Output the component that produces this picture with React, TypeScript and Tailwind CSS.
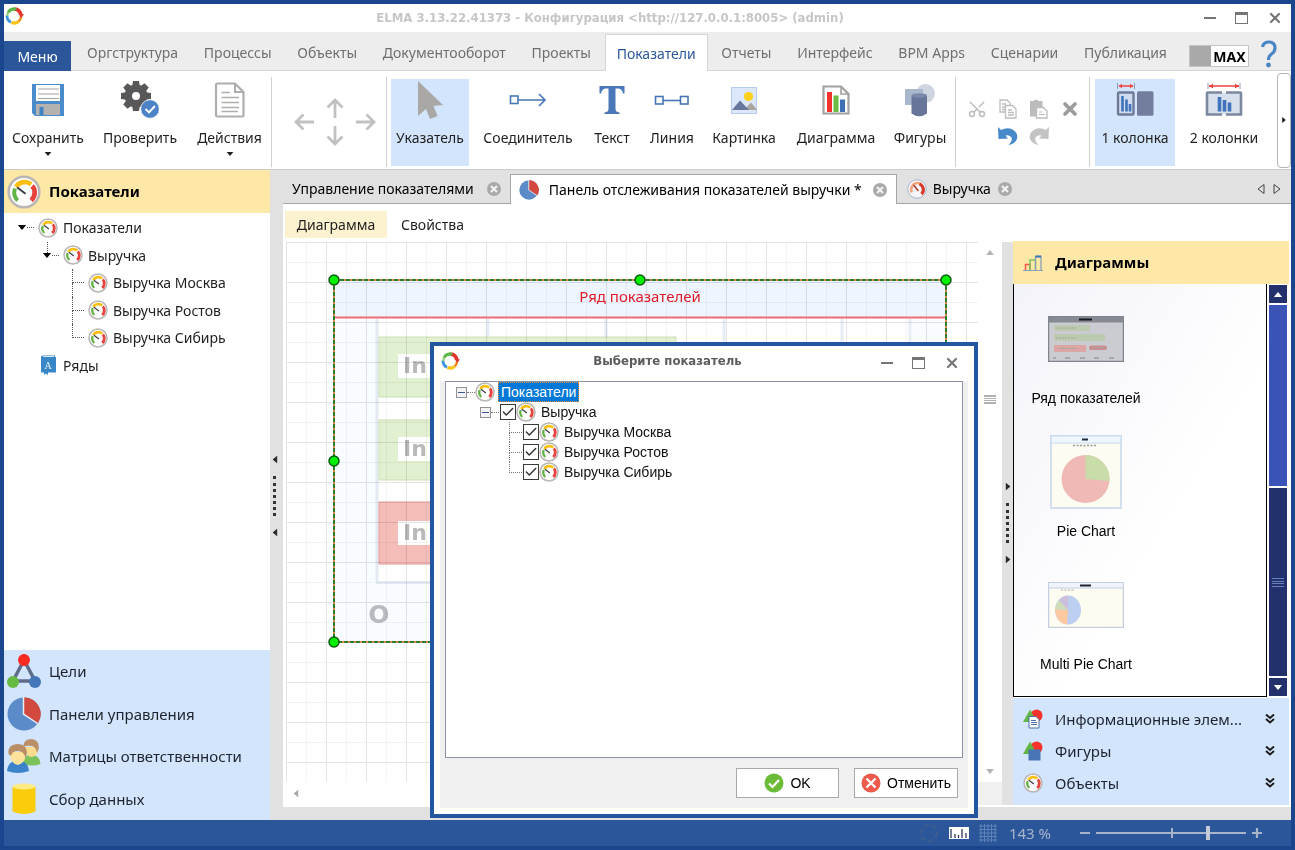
import React from "react";
import { Check, Scissors, X } from "lucide-react";

const UI = "font-['Noto_Sans','Open_Sans',sans-serif]";
const TAHOMA = "font-['DejaVu_Sans_Condensed','DejaVu_Sans',sans-serif]";
const ARIAL = "font-['Liberation_Sans',Arial,sans-serif]";

/* ---------- icons ---------- */

function Gauge({ className }: { className: string }) {
  return (
    <svg viewBox="0 0 40 40" className={className} fill="none" aria-hidden="true">
      <circle cx="20" cy="20" r="18" fill="#fdfdfd" stroke="#b9b6b4" strokeWidth="3" />
      <path d="M12.5 30 C8.5 26 7.5 21 9.5 16" stroke="#63b345" strokeWidth="4.6" />
      <path d="M10.5 14 C14.5 7.500 23 6.500 28.500 11" stroke="#fdbf12" strokeWidth="5.4" />
      <path d="M29.500 13 C34 17 33.500 25 28.500 30" stroke="#e8423c" strokeWidth="5.6" />
      <path d="M12.500 15 L21 21.500" stroke="#3c4046" strokeWidth="2.4" strokeLinecap="round" />
    </svg>
  );
}

function DialGauge() {
  return (
    <svg viewBox="0 0 40 40" className="size-5 shrink-0" fill="none" aria-hidden="true">
      <circle cx="20" cy="20" r="18.500" fill="#f4f6f9" stroke="#a3b3c8" strokeWidth="2" />
      <path d="M9 27 C6 16 13 8 21 8 C31 8 36 20 29 30" stroke="#f3a27c" strokeWidth="5" />
      <path d="M25 10 C34 14 35 25 29 30" stroke="#d7372c" strokeWidth="6" />
      <path d="M14 13 L22 23" stroke="#a43a2f" strokeWidth="3" strokeLinecap="round" />
    </svg>
  );
}

function Logo() {
  return (
    <svg viewBox="0 0 20 20" className="size-5 shrink-0" fill="none" strokeWidth="3" aria-hidden="true">
      <path d="M4 6.500 A7 7 0 0 1 10 3" stroke="#58b747" />
      <path d="M11 3 A7 7 0 0 1 16.800 9" stroke="#e5322b" strokeWidth="3.600" />
      <path d="M17 10 A7 7 0 0 1 14.500 15.500" stroke="#f08a1e" strokeWidth="2.400" />
      <path d="M14.500 15.500 A7 7 0 0 1 7.500 16.500" stroke="#fbc412" strokeWidth="3.400" />
      <path d="M7 16.200 A7 7 0 0 1 3 9.500" stroke="#3f94dc" strokeWidth="2.800" />
      <path d="M3.200 10 A7 7 0 0 1 4.500 6" stroke="#8fce72" strokeWidth="2.200" />
      <path d="M15 7.500 L20 8.500 L17 12Z" fill="#e5322b" />
      <path d="M9.500 0.500 L13 2.800 L10 5.500Z" fill="#58b747" />
    </svg>
  );
}

function PieIcon({ className }: { className: string }) {
  return (
    <svg viewBox="0 0 34 34" className={className} aria-hidden="true">
      <circle cx="17" cy="17" r="16.500" fill="#5b8bc9" />
      <path d="M17 17 V0.500 A16.500 16.500 0 0 1 31 26Z" fill="#d2493f" />
      <path d="M16.500 0 V17 L30.500 26.500" stroke="#e7eef8" strokeWidth="1.500" fill="none" />
    </svg>
  );
}

function SaveIcon() {
  return (
    <svg viewBox="0 0 32 32" className="size-8" aria-hidden="true">
      <path d="M0 0H32V32H3L0 29Z" fill="#4a8ccb" />
      <rect x="4" y="1" width="24" height="16" fill="#fff" />
      <path d="M6 5H27M6 10H27M6 14.500H27" stroke="#a9a0a0" />
      <rect x="4" y="20" width="24" height="11" fill="#b4b1af" />
      <rect x="7.500" y="23" width="4" height="8" fill="#3f82c2" />
    </svg>
  );
}

function GearCheckIcon() {
  const teeth = [0, 45, 90, 135, 180, 225, 270, 315];
  return (
    <svg viewBox="0 0 38 38" className="size-[38px]" aria-hidden="true">
      {teeth.map((a) => (
        <path key={a} d="M12 0H18L19 7H11Z" fill="#58585a" transform={`rotate(${a} 15 15)`} />
      ))}
      <circle cx="15" cy="15" r="11.500" fill="#58585a" />
      <circle cx="15" cy="15" r="4" fill="#fff" />
      <circle cx="29" cy="28" r="9.300" fill="#4c82c6" stroke="#fff" strokeWidth="0.800" />
      <path d="M24.500 28 L28 31.500 L34 25" stroke="#fff" strokeWidth="1.900" fill="none" />
    </svg>
  );
}

function ActionsIcon() {
  return (
    <svg viewBox="0 0 32 36" className="h-9 w-8" fill="none" stroke="#b0aeac" aria-hidden="true">
      <path d="M3.500 1.500H21L29.500 10V33.500Q29.500 34.500 28.500 34.500H3.500Q2 34.500 2 33.500V2.500Q2 1.500 3.500 1.500Z" strokeWidth="2.200" />
      <path d="M21 2V10H29" strokeWidth="2" />
      <path d="M7.500 10.500H16M7.500 15.500H25M7.500 20.500H25M7.500 25.500H25M7.500 29.500H24" strokeWidth="1.400" />
    </svg>
  );
}

function PointerIcon() {
  return (
    <svg viewBox="0 0 26 38" className="h-[38px] w-[26px]" aria-hidden="true">
      <path d="M1 0 L26 24 L16.500 25 L20.500 35 L13 38 L9 28 L1 35Z" fill="#aaa8a7" />
    </svg>
  );
}

function ConnectorIcon() {
  return (
    <svg viewBox="0 0 38 14" className="h-3.5 w-[38px]" fill="none" stroke="#4876b4" strokeWidth="1.600" aria-hidden="true">
      <rect x="1.500" y="3" width="7.500" height="7.500" />
      <path d="M9 7H36M30 1L36 7L30 13" />
    </svg>
  );
}

function LineIcon() {
  return (
    <svg viewBox="0 0 36 12" className="h-3 w-9" fill="none" stroke="#4876b4" strokeWidth="1.600" aria-hidden="true">
      <rect x="1.500" y="2.500" width="7.500" height="7.500" />
      <rect x="26.500" y="2.500" width="7.500" height="7.500" />
      <path d="M9 6.500H26.500" />
    </svg>
  );
}

function TextIcon() {
  return (
    <svg viewBox="0 0 26 28" className="h-7 w-[26px]" aria-hidden="true">
      <path d="M0.500 0H25.500V7.500H24Q23 2.500 19 2.500H16.500V23Q16.500 26 20.500 26.500V28H5.500V26.500Q9.500 26 9.500 23V2.500H7Q3 2.500 2 7.500H0.500Z" fill="#4a78b8" />
    </svg>
  );
}

function PictureIcon() {
  return (
    <svg viewBox="0 0 26 27" className="h-[27px] w-[26px]" aria-hidden="true">
      <rect x="0.500" y="0.500" width="25" height="26" fill="#dce7fb" stroke="#b6cbf2" />
      <circle cx="17.500" cy="9.500" r="4.600" fill="#fbd11c" />
      <path d="M13 23 L20 15.500 L25.500 22V23Z" fill="#a9a6a0" />
      <path d="M1 23 L9 13.500 L18 23Z" fill="#66779b" />
    </svg>
  );
}

function ChartFileIcon() {
  return (
    <svg viewBox="0 0 28 30" className="h-[30px] w-7" fill="none" aria-hidden="true">
      <path d="M1.500 1.500H19L26.500 9V28.500H1.500Z" stroke="#a3a09e" strokeWidth="2.200" />
      <path d="M19 1.500V9H26.500" stroke="#a3a09e" strokeWidth="1.600" />
      <rect x="5" y="7" width="5" height="20" fill="#f2322c" />
      <rect x="11.500" y="10.500" width="5" height="16.500" fill="#6bbd45" />
      <rect x="18" y="14.500" width="5" height="12.500" fill="#3f6fb4" />
    </svg>
  );
}

function ShapesIcon() {
  return (
    <svg viewBox="0 0 30 33" className="h-[33px] w-[30px]" aria-hidden="true">
      <circle cx="20.500" cy="9.500" r="9.500" fill="#ced5df" />
      <rect x="0" y="5" width="18" height="16" fill="#a9b7cc" />
      <path d="M6.500 12V29.500Q14 35 22 29.500V12Z" fill="#68759a" />
      <ellipse cx="14.200" cy="11.500" rx="7.700" ry="2.300" fill="#7c88a8" />
    </svg>
  );
}

function OneColumnIcon() {
  return (
    <svg viewBox="0 0 38 34" className="h-[34px] w-[38px]" fill="none" aria-hidden="true">
      <path d="M1.500 0V6M18.500 0V6" stroke="#8e99b4" />
      <path d="M3 3H17" stroke="#f0453e" strokeWidth="1.500" />
      <path d="M2.500 3L6 0.800V5.200ZM17.500 3L14 0.800V5.200Z" fill="#f0453e" />
      <rect x="2" y="9.500" width="15.500" height="22" rx="1" fill="#cfdbee" stroke="#6d7a9a" strokeWidth="2.400" />
      <rect x="21" y="8.300" width="16.500" height="24.500" rx="1.500" fill="#737d9d" />
      <path d="M6.500 13V28.500M10.500 16.500V28.500M14 21V28.500" stroke="#3f73bc" strokeWidth="2.600" />
    </svg>
  );
}

function TwoColumnsIcon() {
  return (
    <svg viewBox="0 0 38 34" className="h-[34px] w-[38px]" fill="none" aria-hidden="true">
      <path d="M3 0V6M35 0V6" stroke="#8e99b4" />
      <path d="M4 3H34" stroke="#f0453e" strokeWidth="1.500" />
      <path d="M3.500 3L8 0.800V5.200ZM34.500 3L30 0.800V5.200Z" fill="#f0453e" />
      <rect x="2" y="9.500" width="34" height="22" fill="#d6dfeb" />
      <path d="M17 9.500H2.500Q2 9.500 2 10.500V31.500H17M21 9.500H35.500Q36 9.500 36 10.500V31.500H21" stroke="#7d879f" strokeWidth="2.600" />
      <path d="M14.500 14V28.500M19.500 17V28.500M24.500 19.500V28.500" stroke="#3f73bc" strokeWidth="3.600" />
    </svg>
  );
}

function UndoIcon({ color, flip }: { color: string; flip?: boolean }) {
  return (
    <svg viewBox="0 0 20 18" className={flip ? "h-[18px] w-5 -scale-x-100" : "h-[18px] w-5"} aria-hidden="true">
      <path d="M0 0 L3.200 3 Q9 0 14.500 2.500 Q20.500 6 19 12 Q17 17 10.500 18 Q15 14 13.500 10.500 Q11 7.500 7.500 8.500 L10 11.500 L0.500 12Z" fill={color} />
    </svg>
  );
}

function CopyIcon() {
  return (
    <svg viewBox="0 0 18 20" className="h-5 w-[18px]" fill="#fff" stroke="#bdbdbd" strokeWidth="1.300" aria-hidden="true">
      <path d="M1 1H8L11 4V13H1Z" />
      <path d="M3 5H7M3 8H7M3 10.500H7" />
      <path d="M6.500 6.500H13.500L17 10V19H6.500Z" />
      <path d="M9 11H13M9 13.500H15M9 16H15" />
    </svg>
  );
}

function PasteIcon() {
  return (
    <svg viewBox="0 0 19 20" className="h-5 w-[19px]" aria-hidden="true">
      <path d="M1 2H4.500Q7 -1 9.500 2H13.500V17.500H1Z" fill="#bcbcbc" />
      <path d="M7.500 8.500H14.500L18 12V19H7.500Z" fill="#fff" stroke="#bcbcbc" strokeWidth="1.300" />
      <path d="M10 13H13M10 15.500H16" stroke="#bcbcbc" />
    </svg>
  );
}

function ArrowGlyph({ turn }: { turn: string }) {
  return (
    <svg viewBox="0 0 20 20" className={`size-5 ${turn}`} fill="none" stroke="#c1c1c1" strokeWidth="2.800" aria-hidden="true">
      <path d="M10 20V2M2.500 9.500L10 2L17.500 9.500" />
    </svg>
  );
}

function CloseDot() {
  return (
    <svg viewBox="0 0 16 16" className="size-4" aria-hidden="true">
      <circle cx="8" cy="8" r="7" fill="#a9a9a9" />
      <path d="M5 5L11 11M11 5L5 11" stroke="#f2f2f2" strokeWidth="2.200" />
    </svg>
  );
}

function Triangle({ className }: { className: string }) {
  return (
    <svg viewBox="0 0 10 6" className={className} aria-hidden="true">
      <path d="M0 0H10L5 6Z" fill="currentColor" />
    </svg>
  );
}

function GoalsIcon() {
  return (
    <svg viewBox="0 0 34 34" className="size-[34px]" aria-hidden="true">
      <path d="M17 6L6 27H28Z" fill="none" stroke="#5e6c8a" strokeWidth="3.500" />
      <circle cx="17" cy="6" r="6" fill="#fb2a21" />
      <circle cx="6" cy="28" r="6" fill="#68bb42" />
      <circle cx="28" cy="28" r="6" fill="#4576b9" />
    </svg>
  );
}

function PeopleIcon() {
  return (
    <svg viewBox="0 0 34 34" className="size-[34px]" aria-hidden="true">
      <path d="M15 25 Q16 16 24 16 Q33 16 33.500 25 Q26 28 15 25Z" fill="#7cc25a" />
      <path d="M18 8 Q19 18 25 18 Q31 17 31.500 8Z" fill="#fbdc8c" />
      <path d="M16.500 8 Q16 0 25 0 Q32 1 32 9 L30 14 Q29 8 25 7 Q19 6 16.500 8Z" fill="#ba9068" />
      <path d="M0 32 Q1 23 8 22 H14 Q21 23 22 32 Q11 36 0 32Z" fill="#3d83c9" />
      <path d="M3 13 Q3 25 11 26 Q19 24 19 13Z" fill="#fce29a" />
      <path d="M1.500 15 Q0 6 10 5 Q20 5 20 14 L18.500 19 Q17 12 11 12 Q5 12 4 17Z" fill="#b98e66" />
    </svg>
  );
}

function DatabaseIcon() {
  return (
    <svg viewBox="0 0 34 34" className="size-[34px]" aria-hidden="true">
      <path d="M5.500 4V29.500Q17 34.500 28.500 29.500V4Z" fill="#f9cc0c" />
      <ellipse cx="17" cy="4.500" rx="11.500" ry="3" fill="#fdec86" />
    </svg>
  );
}

function BookIcon() {
  return (
    <svg viewBox="0 0 16 20" className="h-5 w-4 shrink-0" aria-hidden="true">
      <path d="M1 2 Q1 0.500 3 0.500H15V2H16V17.500H8V20L6 18.500L4 20V17.500H1Z" fill="#3a87c7" />
      <path d="M3 1.500H14" stroke="#d7e8f6" />
      <text x="8" y="14" textAnchor="middle" fontSize="10" fill="#e9f3fb" fontFamily="Liberation Serif">A</text>
    </svg>
  );
}

function BarsIcon() {
  return (
    <svg viewBox="0 0 20 16" className="h-4 w-5" fill="none" aria-hidden="true">
      <path d="M0 15.500H20" stroke="#8ca0b8" />
      <path d="M2.500 15V9.500H7V15" stroke="#f0574a" strokeWidth="1.500" />
      <path d="M7 15V5H12.500V15" stroke="#7cc25c" strokeWidth="1.500" />
      <path d="M12.500 15V1.500H18V15" stroke="#8ca0b8" strokeWidth="1.300" />
      <path d="M12.500 1.500H18" stroke="#3f76b8" strokeWidth="2" />
    </svg>
  );
}

function FigureIcon({ doc }: { doc?: boolean }) {
  return (
    <svg viewBox="0 0 20 20" className="size-5" aria-hidden="true">
      <circle cx="13.500" cy="6.500" r="6" fill="#f5322b" />
      <path d="M0 13L7 0.500L14 13Z" fill="#62b447" />
      {doc ? (
        <>
          <path d="M6 7.500H13L16 10.500V19H6Z" fill="#fff" stroke="#4a72a8" />
          <path d="M8 11.500H13M8 13.500H14M8 15.500H14" stroke="#4a72a8" />
        </>
      ) : (
        <rect x="5.500" y="8.500" width="12" height="11" fill="#4774b5" />
      )}
    </svg>
  );
}

function DoubleChevron() {
  return (
    <svg viewBox="0 0 10 10" className="size-2.5" fill="none" stroke="#1c1c1c" strokeWidth="2" aria-hidden="true">
      <path d="M1 0.500L5 4L9 0.500M1 5L5 8.500L9 5" />
    </svg>
  );
}

/* ---------- window chrome ---------- */

function WindowButtons() {
  return (
    <div className="flex items-center gap-[19px] text-[#757575]">
      <button aria-label="Свернуть" className="flex h-4 w-3 items-center">
        <span className="h-0.5 w-full bg-current" />
      </button>
      <button aria-label="Развернуть" className="h-3 w-[13px] border border-t-3 border-current" />
      <button aria-label="Закрыть">
        <X className="size-4" strokeWidth={3.2} />
      </button>
    </div>
  );
}

const menuTabs = [
  "Оргструктура", "Процессы", "Объекты", "Документооборот", "Проекты", "Показатели",
  "Отчеты", "Интерфейс", "BPM Apps", "Сценарии", "Публикация",
];

function MenuBar() {
  return (
    <nav className="flex h-[39px] shrink-0 items-end border-b border-[#d5d5d5] bg-[#ededed] text-[14px] text-[#6f6f6f]">
      <button className="mr-1 -mb-px h-[30px] w-[67px] bg-[#2b579a] text-[14px] text-white">Меню</button>
      <div className="mr-2.5 flex flex-1 items-end justify-between">
        {menuTabs.map((t) => (
          <a
            key={t}
            href="#"
            className={
              t === "Показатели"
                ? "-mb-px flex h-[37px] items-center border border-b-0 border-[#d5d5d5] bg-white px-[11px] text-[#2b579a]"
                : "flex h-[35px] items-center px-3"
            }
          >
            {t}
          </a>
        ))}
      </div>
      <div className="mr-3.5 flex items-center gap-3 pb-0.5">
        <button className="mt-1 flex h-[22px] w-[60px] items-center border border-[#c4c4c4] bg-white text-[14px] font-bold text-black">
          <span className="h-full w-[21px] bg-[#a9a9a9]" />
          <span className="flex-1">MAX</span>
        </button>
        <button aria-label="Справка" className="text-[#4a85c5]">
          <svg viewBox="0 0 16 28" className="h-7 w-4" fill="none" aria-hidden="true">
            <path d="M1.500 7 Q2.500 2 8 2 Q14 2 14 8 Q14 11.500 10.500 14 Q7.500 16 7.500 20" stroke="currentColor" strokeWidth="3.200" />
            <circle cx="7.500" cy="25" r="2.400" fill="currentColor" />
          </svg>
        </button>
      </div>
    </nav>
  );
}

function Tool({ label, icon, width, active, drop }: {
  label: string; icon: React.ReactNode; width: string; active?: boolean; drop?: boolean;
}) {
  return (
    <button className={`flex h-[87px] shrink-0 flex-col items-center whitespace-nowrap ${width} ${active ? "bg-[#d3e5fc]" : ""}`}>
      <span className="flex h-[43px] items-center">{icon}</span>
      <span className="mt-1 leading-6">{label}</span>
      {drop && <Triangle className="mt-0.5 h-1 w-2" />}
    </button>
  );
}

function Divider() {
  return <span className="h-[90px] w-px shrink-0 bg-[#d0d0d0]" />;
}

function Ribbon() {
  return (
    <div className="flex h-[99px] shrink-0 items-center border-b border-[#cccccc] bg-white pt-1 text-[14px] text-[#1f1f1f]">
      <Tool label="Сохранить" icon={<SaveIcon />} width="w-[88px]" drop />
      <Tool label="Проверить" icon={<GearCheckIcon />} width="w-[96px]" />
      <Tool label="Действия" icon={<ActionsIcon />} width="w-[83px]" drop />
      <Divider />
      <div className="mr-2.5 ml-[22px] flex items-center gap-[11px]">
        <button aria-label="Влево"><ArrowGlyph turn="-rotate-90" /></button>
        <div className="flex flex-col gap-2">
          <button aria-label="Вверх"><ArrowGlyph turn="rotate-0" /></button>
          <button aria-label="Вниз"><ArrowGlyph turn="rotate-180" /></button>
        </div>
        <button aria-label="Вправо"><ArrowGlyph turn="rotate-90" /></button>
      </div>
      <Divider />
      <div className="w-1" />
      <Tool label="Указатель" icon={<PointerIcon />} width="w-[78px]" active />
      <Tool label="Соединитель" icon={<ConnectorIcon />} width="w-[118px]" />
      <Tool label="Текст" icon={<TextIcon />} width="w-[50px]" />
      <Tool label="Линия" icon={<LineIcon />} width="w-[70px]" />
      <Tool label="Картинка" icon={<PictureIcon />} width="w-[74px]" />
      <Tool label="Диаграмма" icon={<ChartFileIcon />} width="w-[110px]" />
      <Tool label="Фигуры" icon={<ShapesIcon />} width="w-[58px]" />
      <div className="w-1.5" />
      <Divider />
      <div className="mr-1 ml-[5px] grid grid-cols-[repeat(4,31px)] place-items-center gap-y-2">
        <button aria-label="Вырезать"><Scissors className="size-5 -rotate-90 text-[#bdbdbd]" strokeWidth={1.8} /></button>
        <button aria-label="Копировать"><CopyIcon /></button>
        <button aria-label="Вставить"><PasteIcon /></button>
        <button aria-label="Удалить"><X className="size-5 text-[#9c9c9c]" strokeWidth={4.5} /></button>
        <button aria-label="Отменить действие" className="col-start-2"><UndoIcon color="#478ac9" /></button>
        <button aria-label="Повторить действие"><UndoIcon color="#c3c3c3" flip /></button>
      </div>
      <Divider />
      <div className="w-[5px]" />
      <Tool label="1 колонка" icon={<OneColumnIcon />} width="w-[80px]" active />
      <Tool label="2 колонки" icon={<TwoColumnsIcon />} width="w-[98px]" />
      <button aria-label="Прокрутить ленту" className="-mt-1 ml-auto flex h-[95px] w-3.5 items-center justify-center rounded border border-[#b5b5b5]">
        <Triangle className="h-1 w-1.5 -rotate-90" />
      </button>
    </div>
  );
}

/* ---------- left panel ---------- */

function Leaf({ label, last }: { label: string; last?: boolean }) {
  return (
    <li className="flex items-stretch pl-[68px]">
      <span className="flex w-3 flex-col">
        <span className="flex-1 border-b border-l border-dotted border-[#555]" />
        <span className={last ? "flex-1" : "flex-1 border-l border-dotted border-[#555]"} />
      </span>
      <a href="#" className="ml-1 flex items-center gap-[5px]"><Gauge className="size-5 shrink-0" />{label}</a>
    </li>
  );
}

const leftSections = [
  { label: "Цели", icon: <GoalsIcon /> },
  { label: "Панели управления", icon: <PieIcon className="size-[34px]" /> },
  { label: "Матрицы ответственности", icon: <PeopleIcon /> },
  { label: "Сбор данных", icon: <DatabaseIcon /> },
];

function LeftPanel() {
  return (
    <aside className="flex w-[266px] shrink-0 flex-col bg-white">
      <h2 className="flex h-[43px] shrink-0 items-center gap-2 bg-[#fde8a7] pl-[3px] text-[15px] font-bold text-black">
        <Gauge className="size-[34px]" />
        Показатели
      </h2>
      <ul className="mt-px grid h-[165px] grid-rows-6 text-[14px] text-[#1f1f1f]">
        <li className="flex items-center pl-[13px]">
          <Triangle className="h-[5px] w-2.5 text-black" />
          <span className="mr-1 w-[7px] border-b border-dotted border-[#555]" />
          <a href="#" className="flex items-center gap-[5px]"><Gauge className="size-5" />Показатели</a>
        </li>
        <li className="flex items-stretch pl-[38px]">
          <span className="flex w-2.5 flex-col items-center">
            <span className="flex-1 border-l border-dotted border-[#555]" />
            <Triangle className="h-[5px] w-2.5 text-black" />
            <span className="flex-1" />
          </span>
          <span className="mr-1 w-[7px] self-center border-b border-dotted border-[#555]" />
          <a href="#" className="flex items-center gap-[5px]"><Gauge className="size-5" />Выручка</a>
        </li>
        <Leaf label="Выручка Москва" />
        <Leaf label="Выручка Ростов" />
        <Leaf label="Выручка Сибирь" last />
        <li className="flex items-center pl-9">
          <a href="#" className="flex items-center gap-[7px]"><BookIcon />Ряды</a>
        </li>
      </ul>
      <nav className="mt-auto grid h-[170px] grid-rows-4 bg-[#d3e5fc] text-[15px] text-[#1d2430]">
        {leftSections.map((s) => (
          <a key={s.label} href="#" className="flex items-center gap-2 pl-[3px]">
            {s.icon}
            {s.label}
          </a>
        ))}
      </nav>
    </aside>
  );
}

function Splitter({ side, width, pad }: { side: "left" | "right"; width: string; pad: string }) {
  const turn = side === "left" ? "rotate-90" : "-rotate-90";
  return (
    <div className={`flex shrink-0 flex-col items-center gap-3.5 bg-[#e1e1e1] text-[#2a2a2a] ${width} ${pad}`}>
      <Triangle className={`h-[5px] w-2 ${turn}`} />
      <span className="h-10 border-l-3 border-dotted border-[#333]" />
      <Triangle className={`h-[5px] w-2 ${turn}`} />
    </div>
  );
}

/* ---------- documents ---------- */

function DocumentTabs() {
  return (
    <div className="flex h-[34px] shrink-0 items-end bg-[#e1e1e1] text-[14px] whitespace-nowrap text-black">
      <div className="flex h-[30px] items-center gap-3 border-b border-[#a5a5a5] pr-2 pl-[9px]">
        <a href="#">Управление показателями</a>
        <button aria-label="Закрыть вкладку"><CloseDot /></button>
      </div>
      <div className="flex h-[30px] items-center gap-2.5 border border-b-0 border-[#a5a5a5] bg-white px-2">
        <PieIcon className="size-5" />
        <a href="#">Панель отслеживания показателей выручки *</a>
        <button aria-label="Закрыть вкладку"><CloseDot /></button>
      </div>
      <div className="flex h-[30px] flex-1 items-center gap-1.5 border-b border-[#a5a5a5] pl-2.5">
        <DialGauge />
        <a href="#">Выручка</a>
        <button aria-label="Закрыть вкладку"><CloseDot /></button>
        <div className="mr-2.5 ml-auto flex gap-2">
          <button aria-label="Назад">
            <svg viewBox="0 0 8 10" className="h-2.5 w-2" fill="none" stroke="#444"><path d="M7 0.500V9.500L1 5Z" /></svg>
          </button>
          <button aria-label="Вперёд">
            <svg viewBox="0 0 8 10" className="h-2.5 w-2" fill="none" stroke="#444"><path d="M1 0.500V9.500L7 5Z" /></svg>
          </button>
        </div>
      </div>
    </div>
  );
}

const handles = [[48, 38], [354, 38], [660, 38], [48, 219], [660, 219], [48, 400], [354, 400], [660, 400]];

function Diagram() {
  return (
    <svg className="h-[540px] w-full" aria-label="Ряд показателей">
      <defs>
        <pattern id="grid" width="40" height="40" patternUnits="userSpaceOnUse">
          <path d="M20.500 0V40M0 20.500H40" stroke="#f3f3f3" />
          <path d="M0.500 0V40M0 0.500H40" stroke="#e3e3e3" />
        </pattern>
      </defs>
      <rect x="48" y="39" width="612" height="362" fill="#f8fbff" />
      <rect x="48" y="39" width="612" height="37" fill="#eff5fe" />
      <rect x="92" y="77" width="534" height="263" fill="#fff" />
      <path d="M91 77V340M90 340.500H626" stroke="#e4eaf4" strokeWidth="3" fill="none" />
      <path d="M202 77V340M320 77V340M438 77V340M556 77V340M624 77V340" stroke="#e6edf7" strokeWidth="3" />
      <rect x="93" y="95" width="297" height="60" fill="#e1f0d0" stroke="#cbdfb8" />
      <rect x="93" y="178" width="400" height="60" fill="#e1f0d0" stroke="#cbdfb8" />
      <rect x="93" y="260" width="240" height="62" fill="#f4bdb8" stroke="#e29c98" />
      <g fill="#fff">
        <rect x="112" y="112" width="180" height="24" />
        <rect x="112" y="195" width="180" height="24" />
        <rect x="112" y="279" width="180" height="24" />
      </g>
      <g fontFamily="DejaVu Sans" fontWeight="bold" fontSize="22" fill="#b9b9b9">
        <text x="117" y="131">In</text>
        <text x="117" y="214">In</text>
        <text x="117" y="298">In</text>
      </g>
      <text x="93" y="381" textAnchor="middle" fontFamily="DejaVu Sans" fontWeight="bold" fontSize="25" fill="#b8babd">О</text>
      <rect width="100%" height="100%" fill="url(#grid)" className="mix-blend-multiply" />
      <path d="M48 75.500H660" stroke="#ee6f73" strokeWidth="2" />
      <text x="354" y="60" textAnchor="middle" fontFamily="Noto Sans" fontSize="15" fill="#dd1c28">Ряд показателей</text>
      <rect x="48" y="38" width="612" height="362" fill="none" stroke="#d98a4a" strokeWidth="2" />
      <rect x="48" y="38" width="612" height="362" fill="none" stroke="#2c7a2c" strokeWidth="2" strokeDasharray="4 2" />
      {handles.map(([x, y]) => (
        <circle key={`${x}-${y}`} cx={x} cy={y} r="5" fill="#00f000" stroke="#0b5c12" strokeWidth="1.500" />
      ))}
    </svg>
  );
}

function Workspace() {
  return (
    <div className="flex min-w-0 flex-1 flex-col bg-white pl-[3px]">
      <div className="flex">
        <div className="min-w-0 flex-1"><Diagram /></div>
        <div className="flex w-6 flex-col items-center justify-between py-2 text-[#b5b5b5]">
          <Triangle className="h-[5px] w-2 rotate-180" />
          <span className="mb-[226px] h-[9px] w-3 border-y-2 border-[#b0b0b0] py-px">
            <span className="block h-full border-y border-[#b0b0b0]" />
          </span>
          <Triangle className="h-[5px] w-2" />
        </div>
      </div>
      <div className="flex flex-1 items-center pl-1.5">
        <Triangle className="h-[5px] w-2 rotate-90 text-[#a9a9a9]" />
        <span className="ml-auto h-full w-6 bg-[#f0f0f0]" />
      </div>
    </div>
  );
}

/* ---------- right panel ---------- */

function SeriesThumb() {
  return (
    <svg viewBox="0 0 76 46" className="h-[46px] w-[76px]" aria-hidden="true">
      <rect x="0.500" y="0.500" width="75" height="45" fill="#cbccd1" stroke="#7f848f" strokeWidth="1.500" />
      <rect x="1" y="1" width="74" height="5.500" fill="#868a92" />
      <path d="M31 3.500H44" stroke="#15171c" strokeWidth="2" />
      <rect x="6" y="9" width="36" height="6" fill="#bccab0" />
      <rect x="6" y="18" width="51" height="7" fill="#bccab0" />
      <rect x="6" y="29" width="32" height="7" fill="#dba5a4" />
      <rect x="41" y="29.500" width="18" height="4.500" rx="2" fill="#c98f90" />
      <path d="M9 12H28M8 22H28M11 32.500H29M45 31.500H55" stroke="#a3a79f" strokeDasharray="2 1" />
      <path d="M5 42H8M17 42H22M32 42H37M46 42H51M61 42H66" stroke="#9a9ca2" strokeWidth="1.500" />
    </svg>
  );
}

function PieThumb() {
  return (
    <svg viewBox="0 0 72 74" className="h-[74px] w-[72px]" aria-hidden="true">
      <rect x="1" y="1" width="70" height="72" fill="#fdfcf2" stroke="#d3dfee" strokeWidth="2" />
      <rect x="1" y="1" width="70" height="7" fill="#eff6fe" stroke="#c6daf0" />
      <path d="M32 4.500H38" stroke="#1f2d44" strokeWidth="2" />
      <path d="M23 10.500H46" stroke="#9c9c9c" strokeDasharray="2 1.500" strokeWidth="1.500" />
      <circle cx="35.500" cy="44" r="24" fill="#efbab6" />
      <path d="M35.500 44V20A24 24 0 0 1 59.500 46Z" fill="#c8dda9" />
    </svg>
  );
}

function MultiPieThumb() {
  return (
    <svg viewBox="0 0 76 46" className="h-[46px] w-[76px]" aria-hidden="true">
      <rect x="0.500" y="0.500" width="75" height="45" fill="#fdfcf0" stroke="#c5cfe2" strokeWidth="1.500" />
      <rect x="1" y="1" width="74" height="5" fill="#eff4fc" />
      <path d="M1 6H75" stroke="#c5cfe2" />
      <path d="M32 3.500H43" stroke="#1f2233" strokeWidth="2" />
      <path d="M13 8H27" stroke="#a9a9a9" strokeDasharray="2 1.500" />
      <ellipse cx="20" cy="28" rx="13" ry="14.500" fill="#bdcff0" />
      <path d="M20 28L19 42.500Q8 41 7 27Z" fill="#fcc9a0" />
      <path d="M20 28L7 27Q8 21 11 18Z" fill="#cedcb8" />
      <path d="M20 28L11 18Q15 13.500 20 13.500Z" fill="#cdbfdc" />
    </svg>
  );
}

const shapes = [
  { label: "Ряд показателей", art: <SeriesThumb /> },
  { label: "Pie Chart", art: <PieThumb /> },
  { label: "Multi Pie Chart", art: <MultiPieThumb /> },
];

const rightSections = [
  { label: "Информационные элем...", icon: <FigureIcon doc /> },
  { label: "Фигуры", icon: <FigureIcon /> },
  { label: "Объекты", icon: <Gauge className="size-5" /> },
];

function RightPanel() {
  return (
    <aside className="-mt-px mr-0.5 flex w-[276px] shrink-0 flex-col bg-white">
      <h2 className="flex h-[43px] shrink-0 items-center gap-3 bg-[#fde8a7] pl-2.5 text-[15px] font-bold text-black">
        <BarsIcon />
        Диаграммы
      </h2>
      <div className="flex flex-1">
        <ul className={`flex flex-1 flex-col gap-[27px] border border-t-0 border-black bg-linear-to-br from-[#f3f3fa] to-white to-60% pt-[18px] text-[14px] text-black ${ARIAL}`}>
          {shapes.map((s) => (
            <li key={s.label} className="flex w-[144px] flex-col items-center gap-3">
              <span className="flex h-[74px] items-center">{s.art}</span>
              <span className="leading-5">{s.label}</span>
            </li>
          ))}
        </ul>
        <div className="flex w-[22px] flex-col gap-0.5 px-0.5 py-px text-white">
          <button aria-label="Прокрутить вверх" className="flex h-[18px] w-[18px] items-center justify-center bg-[#22306b]">
            <Triangle className="h-[5px] w-2.5 rotate-180" />
          </button>
          <span className="h-[181px] w-[18px] bg-[#3a53b6]" />
          <span className="flex w-[18px] flex-1 items-center justify-center bg-[#22306b]">
            <span className="h-[9px] w-3 border-y border-[#6b7ec0] py-0.5">
              <span className="block h-full border-y border-[#6b7ec0]" />
            </span>
          </span>
          <button aria-label="Прокрутить вниз" className="flex h-[18px] w-[18px] items-center justify-center bg-[#22306b]">
            <Triangle className="h-[5px] w-2.5" />
          </button>
        </div>
      </div>
      <nav className="mt-px flex flex-col bg-[#d3e5fc] pt-[5px] pb-1.5 text-[15px] text-[#1d2430]">
        {rightSections.map((s) => (
          <a key={s.label} href="#" className="flex h-8 items-center gap-3 pr-3.5 pl-2.5">
            {s.icon}
            <span className="flex-1 truncate">{s.label}</span>
            <DoubleChevron />
          </a>
        ))}
      </nav>
    </aside>
  );
}

/* ---------- dialog ---------- */

function Expander() {
  return (
    <button aria-label="Свернуть ветвь" className="flex size-[11px] items-center justify-center border border-[#919191] bg-[#f3f3f3]">
      <span className="h-px w-[7px] bg-[#3c5a9a]" />
    </button>
  );
}

function TreeCheck({ label }: { label: string }) {
  return (
    <label className="flex items-center">
      <span className="grid size-[17px] place-items-center">
        <input type="checkbox" defaultChecked className="peer col-start-1 row-start-1 size-4 appearance-none border border-[#3a3a3a] bg-white" />
        <Check className="pointer-events-none invisible col-start-1 row-start-1 size-3.5 text-[#333] peer-checked:visible" strokeWidth={2.5} />
      </span>
      <Gauge className="size-5 shrink-0" />
      <span className="ml-[5px]">{label}</span>
    </label>
  );
}

function DialogLeaf({ label, last }: { label: string; last?: boolean }) {
  return (
    <li className="flex h-5 items-stretch pl-[63px]">
      <span className="flex w-[13px] flex-col">
        <span className="flex-1 border-b border-l border-dotted border-[#777]" />
        <span className={last ? "flex-1" : "flex-1 border-l border-dotted border-[#777]"} />
      </span>
      <TreeCheck label={label} />
    </li>
  );
}

function PickerDialog() {
  return (
    <section role="dialog" aria-label="Выберите показатель" className="absolute top-[338px] left-[426px] w-[548px] border-4 border-[#24559f] bg-white pb-1.5">
      <header className="flex h-[35px] items-center pr-3.5 pb-0.5 pl-1.5">
        <span className="pb-1"><Logo /></span>
        <h3 className={`flex-1 pr-1.5 pb-1 text-center text-[13px] font-bold text-[#5c5c5c] ${TAHOMA}`}>Выберите показатель</h3>
        <WindowButtons />
      </header>
      <div className="mx-1.5 bg-[#f0f0f0] pl-[5px]">
        <ul className={`mr-[5px] h-[377px] border border-[#8a93a5] bg-white text-[14px] text-[#111] ${ARIAL}`}>
          <li className="flex h-5 items-center pl-2.5">
            <Expander />
            <span className="w-2 border-b border-dotted border-[#777]" />
            <Gauge className="size-5 shrink-0" />
            <span className="ml-[3px] bg-[#0078d7] px-[3px] leading-5 text-white outline outline-dotted -outline-offset-1 outline-[#f08a2a]">Показатели</span>
          </li>
          <li className="flex h-5 items-center pl-[34px]">
            <Expander />
            <span className="w-2 border-b border-dotted border-[#777]" />
            <TreeCheck label="Выручка" />
          </li>
          <DialogLeaf label="Выручка Москва" />
          <DialogLeaf label="Выручка Ростов" />
          <DialogLeaf label="Выручка Сибирь" last />
        </ul>
        <div className={`flex justify-end gap-[15px] py-2.5 pr-2.5 text-[14px] text-black ${ARIAL}`}>
          <button className="flex h-[30px] w-[103px] items-center justify-center gap-1.5 border border-[#a9a9a9] bg-white">
            <svg viewBox="0 0 20 20" className="size-5" fill="none" aria-hidden="true">
              <circle cx="10" cy="10" r="9.500" fill="#6cbb37" />
              <path d="M5 10.500L8.500 14L15 7" stroke="#fff" strokeWidth="2.200" />
            </svg>
            OK
          </button>
          <button className="flex h-[30px] w-[104px] items-center justify-center gap-1.5 border border-[#a9a9a9] bg-white">
            <svg viewBox="0 0 20 20" className="size-5" fill="none" aria-hidden="true">
              <circle cx="10" cy="10" r="9.500" fill="#ee5b4c" />
              <path d="M5.500 5.500L14.500 14.500M14.500 5.500L5.500 14.500" stroke="#fff" strokeWidth="2.200" />
            </svg>
            Отменить
          </button>
        </div>
      </div>
    </section>
  );
}

/* ---------- status bar ---------- */

function StatusBar() {
  return (
    <footer className="flex h-[26px] shrink-0 items-center justify-end bg-[#2b579a] pr-[29px] text-[15px] text-[#a8b4ca]">
      <svg viewBox="0 0 20 20" className="size-5" fill="none" aria-hidden="true">
        <circle cx="10" cy="10" r="8" stroke="#3c5c91" strokeWidth="2.500" strokeDasharray="5 3" />
      </svg>
      <svg viewBox="0 0 20 12" className="ml-2.5 h-3 w-5" aria-hidden="true">
        <rect width="20" height="12" fill="#fff" />
        <path d="M2 2V11M6 7V11M9.500 8V11M13 2V11M17 6V11" stroke="#2c3c5c" strokeWidth="1.300" />
      </svg>
      <svg viewBox="0 0 18 18" className="ml-2.5 size-[18px]" stroke="#5f82b8" aria-hidden="true">
        <path d="M2 0V18M5.500 0V18M9 0V18M12.500 0V18M16 0V18M0 2H18M0 5.500H18M0 9H18M0 12.500H18M0 16H18" />
      </svg>
      <span className="ml-3">143 %</span>
      <button aria-label="Уменьшить" className="ml-[29px] h-0.5 w-2.5 bg-current" />
      <div className="relative mx-1.5 flex w-[150px] items-center">
        <span className="absolute left-1/2 h-2.5 w-0.5 bg-current" />
        <input
          type="range"
          aria-label="Масштаб"
          defaultValue={75}
          className="h-4 w-full appearance-none bg-transparent [&::-webkit-slider-runnable-track]:h-0.5 [&::-webkit-slider-runnable-track]:bg-[#a8b4ca] [&::-webkit-slider-thumb]:-mt-1.5 [&::-webkit-slider-thumb]:h-3.5 [&::-webkit-slider-thumb]:w-1 [&::-webkit-slider-thumb]:appearance-none [&::-webkit-slider-thumb]:bg-[#c3cbd9]"
        />
      </div>
      <button aria-label="Увеличить">
        <svg viewBox="0 0 10 10" className="size-2.5" stroke="currentColor" strokeWidth="2.200"><path d="M0 5H10M5 0V10" /></svg>
      </button>
    </footer>
  );
}

export default function App() {
  return (
    <div className={`relative flex min-h-screen flex-col overflow-hidden border-4 border-[#19468c] bg-white ${UI}`}>
      <header className="flex h-7 shrink-0 items-center bg-white pr-2">
        <span className="self-start pt-0.5"><Logo /></span>
        <h1 className={`flex-1 pr-2 text-center text-[13px] font-bold text-[#c6c6c6] ${TAHOMA}`}>
          {"ELMA 3.13.22.41373 - Конфигурация <http://127.0.0.1:8005> (admin)"}
        </h1>
        <WindowButtons />
      </header>
      <MenuBar />
      <Ribbon />
      <div className="flex flex-1">
        <LeftPanel />
        <Splitter side="left" width="w-[13px]" pad="pt-[287px] pr-1" />
        <main className="flex min-w-0 flex-1 flex-col bg-[#e1e1e1] pb-[13px]">
          <DocumentTabs />
          <div className="flex flex-1 flex-col bg-white pb-0.5">
            <nav className="flex h-[38px] shrink-0 items-center gap-0.5 pb-1 pl-0.5 text-[14px] text-[#1f1f1f]">
              <a href="#" className="flex h-[27px] w-[102px] items-center justify-center self-end bg-[#fdf2cf]">Диаграмма</a>
              <a href="#" className="flex h-[27px] items-center self-end px-3">Свойства</a>
            </nav>
            <div className="flex flex-1">
              <Workspace />
              <Splitter side="right" width="w-[11px]" pad="pt-[242px]" />
              <RightPanel />
            </div>
          </div>
        </main>
      </div>
      <StatusBar />
      <PickerDialog />
    </div>
  );
}
